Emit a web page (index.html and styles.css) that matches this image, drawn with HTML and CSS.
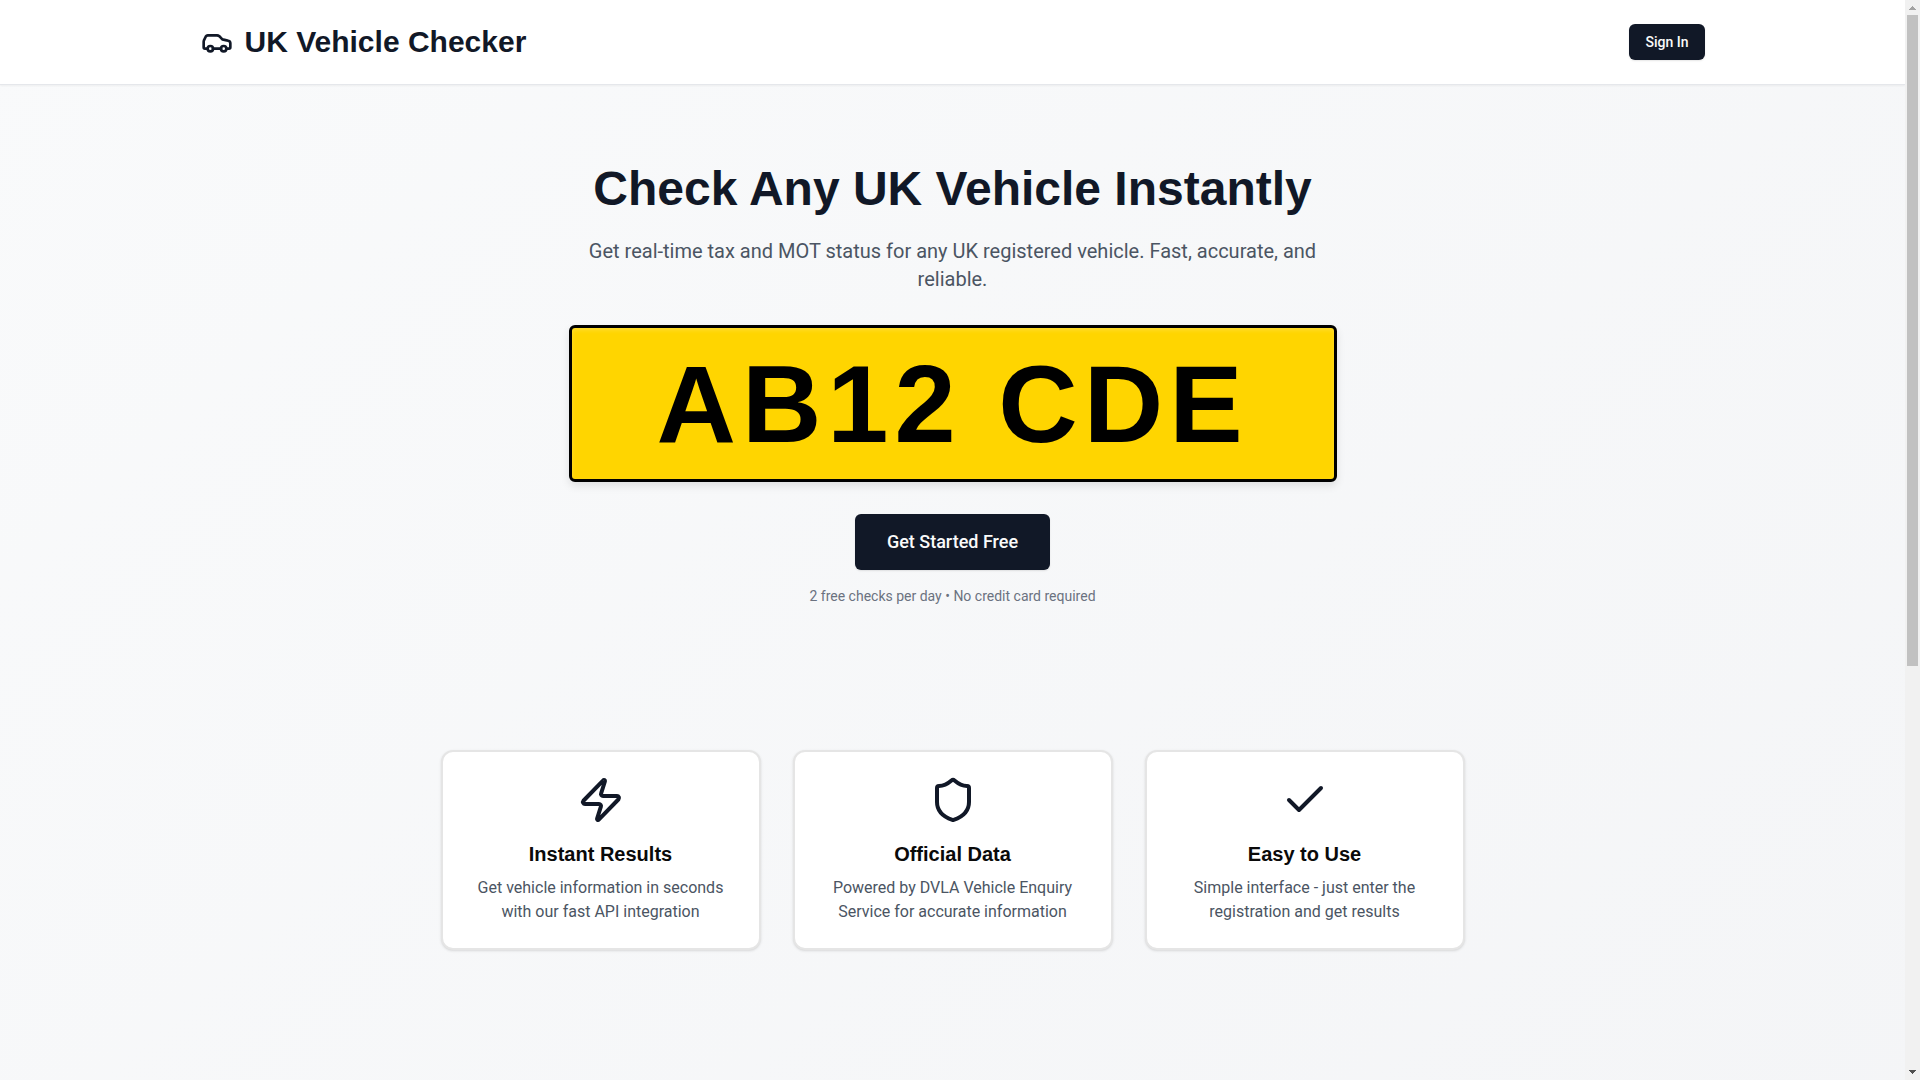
FILE: index.html
```html
<!DOCTYPE html>
<html lang="en">
<head>
<meta charset="utf-8">
<title>UK Vehicle Checker</title>
<meta name="viewport" content="width=device-width, initial-scale=1">
<link rel="stylesheet" href="styles.css">
</head>
<body>
<div class="viewport">
<div class="page">
  <header class="site-header">
    <div class="container header-row">
      <div class="brand">
        <svg class="icon brand-icon" viewBox="0 0 24 24" aria-hidden="true"><path d="M19 17h2c.6 0 1-.4 1-1v-3c0-.9-.7-1.7-1.5-1.9C18.7 10.6 16 10 16 10s-1.3-1.4-2.2-2.3c-.5-.4-1.1-.7-1.8-.7H5c-.6 0-1.1.4-1.4.9l-1.4 2.9A3.7 3.7 0 0 0 2 12v4c0 .6.4 1 1 1h2"/><circle cx="7" cy="17" r="2"/><path d="M9 17h6"/><circle cx="17" cy="17" r="2"/></svg>
        <h1 class="brand-name">UK Vehicle Checker</h1>
      </div>
      <button class="btn btn-small" type="button">Sign In</button>
    </div>
  </header>
  <main>
    <section class="hero">
      <h2 class="hero-title">Check Any UK Vehicle Instantly</h2>
      <p class="hero-text">Get real-time tax and MOT status for any UK registered vehicle. Fast, accurate, and reliable.</p>
      <div class="plate">AB12 CDE</div>
      <button class="btn btn-large" type="button">Get Started Free</button>
      <p class="hero-note">2 free checks per day • No credit card required</p>
    </section>
    <section class="features">
      <article class="card">
        <svg class="icon card-icon" viewBox="0 0 24 24" aria-hidden="true"><path d="M4 14a1 1 0 0 1-.78-1.63l9.9-10.2a.5.5 0 0 1 .86.46l-1.92 6.02A1 1 0 0 0 13 10h7a1 1 0 0 1 .78 1.63l-9.9 10.2a.5.5 0 0 1-.86-.46l1.92-6.02A1 1 0 0 0 11 14z"/></svg>
        <h3 class="card-title">Instant Results</h3>
        <p class="card-text">Get vehicle information in seconds with our fast API integration</p>
      </article>
      <article class="card">
        <svg class="icon card-icon" viewBox="0 0 24 24" aria-hidden="true"><path d="M20 13c0 5-3.5 7.5-7.66 8.95a1 1 0 0 1-.67-.01C7.5 20.5 4 18 4 13V6a1 1 0 0 1 1-1c2 0 4.5-1.2 6.24-2.72a1.17 1.17 0 0 1 1.52 0C14.51 3.81 17 5 19 5a1 1 0 0 1 1 1z"/></svg>
        <h3 class="card-title">Official Data</h3>
        <p class="card-text">Powered by DVLA Vehicle Enquiry Service for accurate information</p>
      </article>
      <article class="card">
        <svg class="icon card-icon" viewBox="0 0 24 24" aria-hidden="true"><path d="M20 6 9 17l-5-5"/></svg>
        <h3 class="card-title">Easy to Use</h3>
        <p class="card-text">Simple interface - just enter the registration and get results</p>
      </article>
    </section>
  </main>
</div>
</div>
<div class="scrollbar" aria-hidden="true">
  <svg class="scroll-arrow" viewBox="0 0 15 15" shape-rendering="crispEdges"><path fill="#a3a3a3" d="M7 6h1v1h1v1h1v1h1v1H4V9h1V8h1V7h1z"/></svg>
  <div class="scroll-track"><div class="scroll-thumb"></div></div>
  <svg class="scroll-arrow" viewBox="0 0 15 15" shape-rendering="crispEdges"><path fill="#505050" d="M4 5h7v1h-1v1H9v1H8v1H7V8H6V7H5V6H4z"/></svg>
</div>
</body>
</html>
```
FILE: styles.css
```css
*, *::before, *::after { box-sizing: border-box; }

body {
  display: flex;
  height: 100vh;
  margin: 0;
  overflow: hidden;
  font-family: Roboto, sans-serif;
  font-size: 16px;
  line-height: 24px;
  color: #0a0a0a;
}

h1, h2, h3, p { margin: 0; }

.viewport {
  flex: 1;
  min-width: 0;
  overflow-y: auto;
  scrollbar-width: none;
}

.page {
  min-height: 162vh;
  background: linear-gradient(to bottom right, #f9fafb, #f3f4f6);
}

.scrollbar {
  display: flex;
  flex-direction: column;
  width: 15px;
  background: #f1f1f1;
}

.scroll-arrow {
  display: block;
  width: 15px;
  height: 15px;
}

.scroll-track {
  flex: 1;
  padding: 0 2px;
}

.scroll-thumb {
  height: 62%;
  background: #c1c1c1;
}

.icon {
  display: block;
  fill: none;
  stroke: #111827;
  stroke-width: 2;
  stroke-linecap: round;
  stroke-linejoin: round;
}

.site-header {
  background: #fff;
  border-bottom: 1px solid #e5e7eb;
  box-shadow: 0 1px 2px rgba(0, 0, 0, 0.05);
}

.container {
  max-width: 1536px;
  margin: 0 auto;
  padding: 24px 16px;
}

.header-row {
  display: flex;
  align-items: center;
  justify-content: space-between;
}

.brand {
  display: flex;
  align-items: center;
  gap: 12px;
}

.brand-icon { width: 32px; height: 32px; }

.brand-name {
  font: bold 30px/36px "Liberation Sans", Arial, sans-serif;
  color: #111827;
}

.btn {
  border: 0;
  border-radius: 6px;
  background: #111827;
  color: #fafafa;
  font-family: inherit;
  font-weight: 500;
  box-shadow: 0 1px 2px rgba(0, 0, 0, 0.1);
  cursor: pointer;
}

.btn-small { padding: 8px 16px; font-size: 14px; line-height: 20px; }
.btn-large { padding: 14px 32px; font-size: 18px; line-height: 28px; }

.hero {
  display: flex;
  flex-direction: column;
  align-items: center;
  max-width: 800px;
  margin: 0 auto;
  padding: 80px 16px;
  text-align: center;
}

.hero-title {
  margin-bottom: 24px;
  font: bold 48px/48px "Liberation Sans", Arial, sans-serif;
  color: #111827;
}

.hero-text {
  margin-bottom: 32px;
  font-size: 20px;
  line-height: 28px;
  color: #4b5563;
}

.plate {
  width: 100%;
  margin-bottom: 32px;
  padding: 20px 16px;
  border: 3px solid #000;
  border-radius: 6px;
  background: #ffd500;
  box-shadow: 0 4px 8px rgba(0, 0, 0, 0.1), inset 0 2px 4px rgba(255, 255, 255, 0.2);
  font: bold 110px/111px "Liberation Sans", Arial, sans-serif;
  letter-spacing: 6px;
  color: #000;
}

.hero-note {
  margin-top: 16px;
  font-size: 14px;
  line-height: 20px;
  color: #6b7280;
}

.features {
  display: grid;
  grid-template-columns: repeat(auto-fit, minmax(280px, 1fr));
  gap: 32px;
  max-width: 1056px;
  margin: 0 auto;
  padding: 64px 16px;
}

.card {
  display: flex;
  flex-direction: column;
  align-items: center;
  padding: 24px;
  border: 2px solid #e5e5e5;
  border-radius: 12px;
  background: #fff;
  box-shadow: 0 1px 3px rgba(0, 0, 0, 0.1), 0 1px 2px -1px rgba(0, 0, 0, 0.1);
  text-align: center;
}

.card-icon { width: 48px; height: 48px; margin-bottom: 16px; }

.card-title {
  margin-bottom: 8px;
  font: bold 20px/28px "Liberation Sans", Arial, sans-serif;
}

.card-text { color: #4b5563; }
```
